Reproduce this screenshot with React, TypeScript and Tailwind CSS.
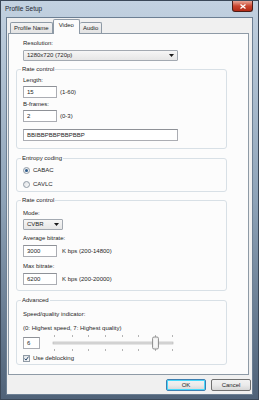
import React from 'react';

const font = { fontFamily: '"Liberation Sans", Arial, sans-serif' };

const Label: React.FC<{ children: React.ReactNode; className?: string }> = ({ children, className = '' }) => (
    <div className={`h-[7px] leading-[7px] text-[6px] text-[#1e1e1e] whitespace-nowrap ${className}`}>{children}</div>
);

const TextBox: React.FC<{ value: string; className?: string }> = ({ value, className = '' }) => (
    <div className={`h-[12px] border border-[#abadb3] border-t-[#8e9197] bg-white pl-[3px] text-[6px] leading-[10px] text-[#1e1e1e] ${className}`}>
        {value}
    </div>
);

const Combo: React.FC<{ value: string; className?: string }> = ({ value, className = '' }) => (
    <div className={`flex items-center justify-between h-[11px] border border-[#a3a9b1] rounded-[1px] bg-gradient-to-b from-[#f6f6f6] to-[#e6e6e6] pl-[3px] pr-[3px] text-[6px] text-[#1e1e1e] ${className}`}>
        <span className="leading-[9px]">{value}</span>
        <svg width="5" height="3" viewBox="0 0 5 3"><path d="M0 0h5L2.5 3z" fill="#1a1a1a" /></svg>
    </div>
);

const Group: React.FC<{ title: string; className?: string; children: React.ReactNode }> = ({ title, className = '', children }) => (
    <div className={`relative ml-[7px] mr-[21px] border border-[#d8e0e6] rounded-[3px] px-[6px] ${className}`}>
        <span className="absolute -top-[4px] left-[4px] bg-[#fcfcfc] px-[1px] h-[7px] leading-[7px] text-[6px] text-[#1e1e1e]">{title}</span>
        {children}
    </div>
);

const Radio: React.FC<{ checked?: boolean; label: string; className?: string }> = ({ checked, label, className = '' }) => (
    <div className={`flex items-center gap-[3px] h-[9px] ${className}`}>
        <div className="w-[7px] h-[7px] rounded-full border border-[#8f9aa5] bg-gradient-to-br from-[#e0e3e6] to-[#fafafa] flex items-center justify-center">
            {checked && <div className="w-[3px] h-[3px] rounded-full bg-[#2c5a8a]" />}
        </div>
        <Label>{label}</Label>
    </div>
);

const Slider: React.FC = () => {
    const ticks = [3, 21, 37, 54, 71, 87, 104, 121];
    return (
        <svg width="124" height="18" viewBox="0 0 124 18" className="ml-[11px]">
            {ticks.map((x) => (
                <g key={x}>
                    <rect x={x} y="1" width="1" height="2" fill="#b4b4b4" />
                    <rect x={x} y="15" width="1" height="2" fill="#b4b4b4" />
                </g>
            ))}
            <rect x="2" y="8" width="120" height="2" fill="#e2e2e2" stroke="#b0b0b0" strokeWidth="0.6" />
            <rect x="101.5" y="3" width="6" height="12" rx="1.5" fill="#ededed" stroke="#7d7d7d" strokeWidth="0.8" />
            <rect x="103" y="4.5" width="3" height="9" rx="1" fill="#f8f8f8" />
        </svg>
    );
};

const Button: React.FC<{ label: string; primary?: boolean }> = ({ label, primary }) => (
    <div
        className={`w-[40px] h-[12px] rounded-[2px] border flex items-center justify-center text-[6px] text-[#1e1e1e] bg-gradient-to-b from-[#f2f2f2] via-[#ebebeb] to-[#d6d6d6] ${primary ? 'border-[#3c7fb1] shadow-[inset_0_0_0_1px_#48d8fb]' : 'border-[#707070]'}`}
    >
        {label}
    </div>
);

const App: React.FC = () => {
    return (
        <div style={font} className="w-[259px] h-[400px] flex flex-col bg-gradient-to-b from-[#c3d2e1] via-[#8ea3b8] to-[#4f6278] border border-[#3b4858] overflow-hidden">
            <div className="h-[16px] flex items-start justify-between pl-[4px]">
                <span className="mt-[4px] text-[6.5px] leading-[7px] text-[#1c2630]">Profile Setup</span>
                <div className="mr-[5px] w-[21px] h-[11px] rounded-b-[3px] border border-t-0 border-[#4b1d18] bg-gradient-to-b from-[#e8a597] via-[#c9452f] to-[#b32a15] flex items-center justify-center">
                    <svg width="6" height="5" viewBox="0 0 6 5"><path d="M0.5 0.5l5 4M5.5 0.5l-5 4" stroke="#ffffff" strokeWidth="1.3" /></svg>
                </div>
            </div>
            <div className="flex-1 mx-[5px] mb-[4px] bg-[#f0f0f0] border border-[#6c7f93] flex flex-col">
                {/* tabs */}
                <div className="flex items-end h-[15px] pl-[3px]">
                    <div className="h-[11px] px-[3px] border border-b-0 border-[#8e9aa6] rounded-t-[2px] bg-gradient-to-b from-[#f3f3f3] to-[#e3e3e3] text-[6px] leading-[10px] text-[#1e1e1e]">Profile Name</div>
                    <div className="relative z-10 -mb-[1px] h-[15px] px-[5px] border border-b-0 border-[#8e9aa6] rounded-t-[2px] bg-[#fcfcfc] text-[6px] leading-[11px] text-[#1e1e1e]">Video</div>
                    <div className="h-[11px] px-[3px] border border-b-0 border-l-0 border-[#8e9aa6] rounded-t-[2px] bg-gradient-to-b from-[#f3f3f3] to-[#e3e3e3] text-[6px] leading-[10px] text-[#1e1e1e]">Audio</div>
                </div>
                {/* panel */}
                <div className="ml-[1px] mr-[3px] border border-[#8e9aa6] bg-[#fcfcfc] pt-[6px] pb-[9px]">
                    <div className="px-[14px]">
                        <Label>Resolution:</Label>
                        <Combo value="1280x720 (720p)" className="mt-[3px] w-[155px]" />
                    </div>

                    <Group title="Rate control" className="mt-[8px] pb-[7px]">
                        <Label className="mt-[7px]">Length:</Label>
                        <div className="flex items-center gap-[3px] mt-[2px]">
                            <TextBox value="15" className="w-[34px]" />
                            <Label>(1-60)</Label>
                        </div>
                        <Label className="mt-[3px]">B-frames:</Label>
                        <div className="flex items-center gap-[3px] mt-[2px]">
                            <TextBox value="2" className="w-[34px]" />
                            <Label>(0-3)</Label>
                        </div>
                        <TextBox value="BBIBBPBBPBBPBBP" className="mt-[7px] w-[155px]" />
                    </Group>

                    <Group title="Entropy coding" className="mt-[9px] pb-[2px]">
                        <Radio checked label="CABAC" className="mt-[7px]" />
                        <Radio label="CAVLC" className="mt-[5px]" />
                    </Group>

                    <Group title="Rate control" className="mt-[8px] pb-[5px]">
                        <Label className="mt-[9px]">Mode:</Label>
                        <Combo value="CVBR" className="mt-[2px] w-[40px]" />
                        <Label className="mt-[5px]">Average bitrate:</Label>
                        <div className="flex items-center gap-[5px] mt-[3px]">
                            <TextBox value="3000" className="w-[34px]" />
                            <Label>K bps (200-14800)</Label>
                        </div>
                        <Label className="mt-[6px]">Max bitrate:</Label>
                        <div className="flex items-center gap-[5px] mt-[3px]">
                            <TextBox value="6200" className="w-[34px]" />
                            <Label>K bps (200-20000)</Label>
                        </div>
                    </Group>

                    <Group title="Advanced" className="mt-[9px] pb-[2px]">
                        <Label className="mt-[10px]">Speed/quality indicator:</Label>
                        <Label className="mt-[7px]">(0: Highest speed, 7: Highest quality)</Label>
                        <div className="flex items-center mt-[4px] h-[14px]">
                            <TextBox value="6" className="w-[17px]" />
                            <Slider />
                        </div>
                        <div className="flex items-center gap-[3px] mt-[4px] h-[8px]">
                            <div className="w-[7px] h-[7px] border border-[#8f9aa5] bg-gradient-to-br from-[#e0e3e6] to-[#fafafa] flex items-center justify-center">
                                <svg width="5" height="5" viewBox="0 0 5 5"><path d="M0.6 2.6l1.4 1.5L4.5 0.6" stroke="#2c4a6c" strokeWidth="1" fill="none" /></svg>
                            </div>
                            <Label>Use deblocking</Label>
                        </div>
                    </Group>
                </div>
                {/* buttons */}
                <div className="flex justify-end gap-[5px] mt-[4px] mr-[1px]">
                    <Button label="OK" primary />
                    <Button label="Cancel" />
                </div>
            </div>
        </div>
    );
};

export default App;
